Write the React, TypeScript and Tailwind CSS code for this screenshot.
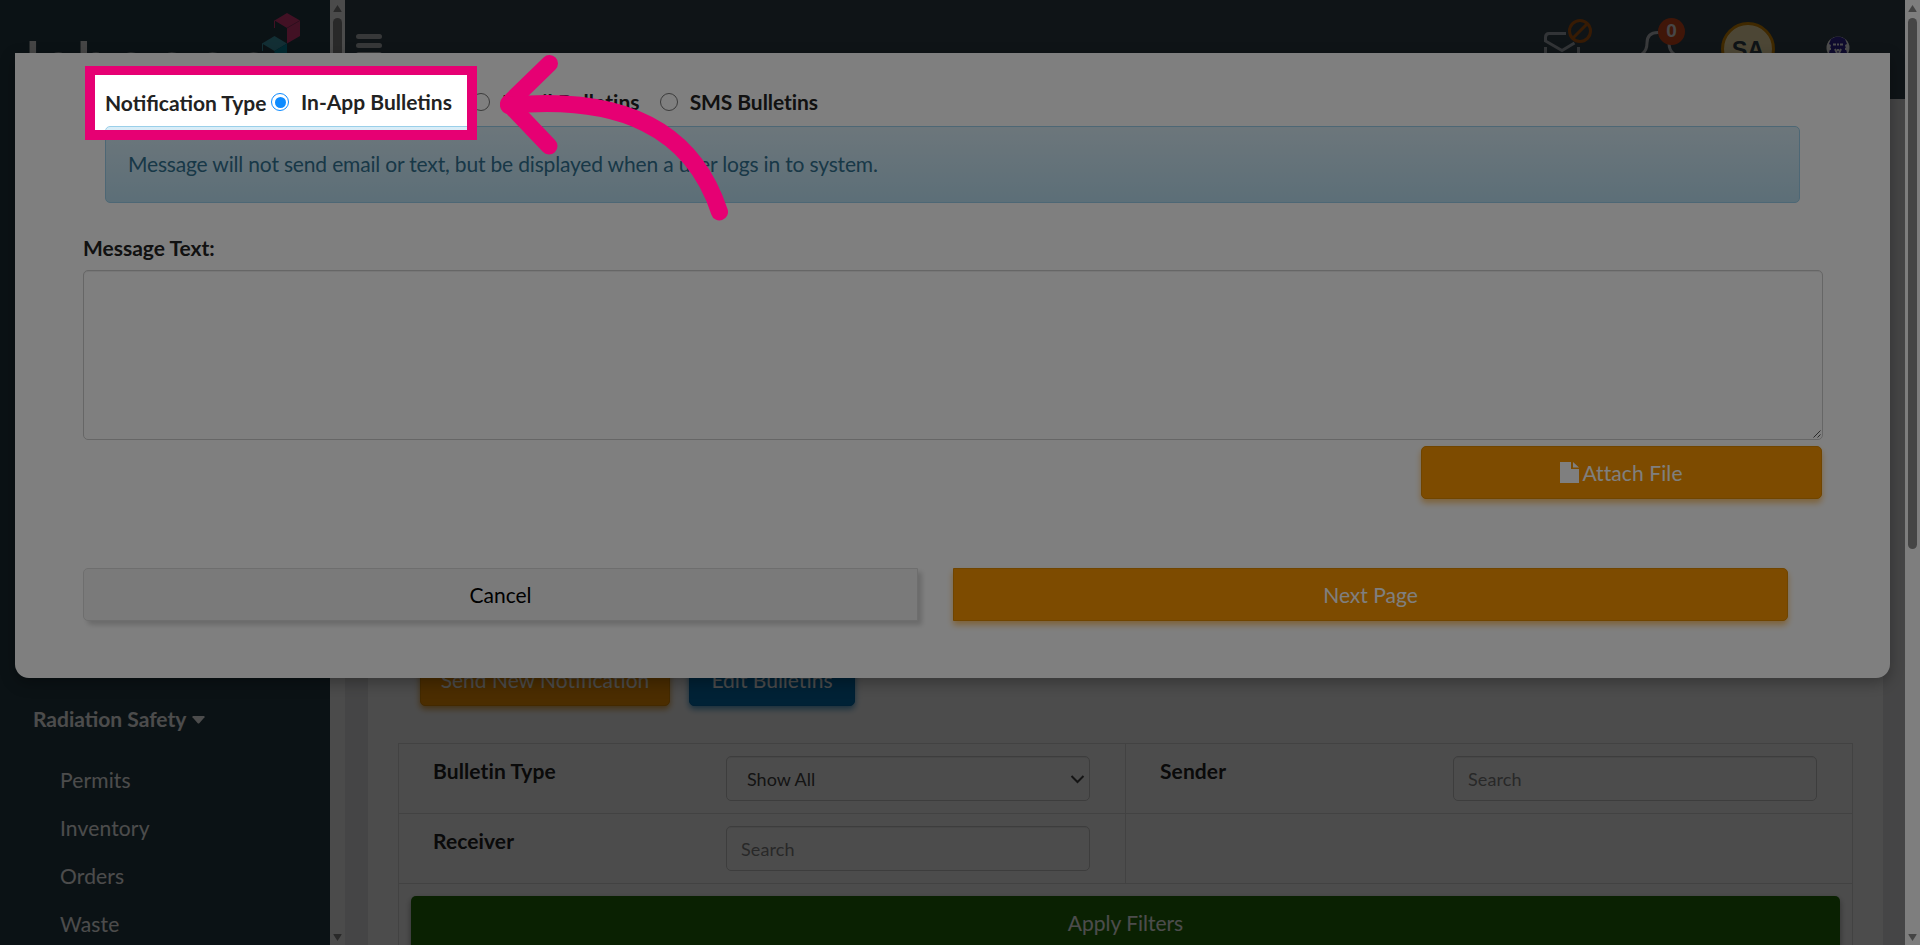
import type { ReactNode } from "react";

const navItems = ["Permits", "Inventory", "Orders", "Waste"];

function Scrollbar({ thumb, track }: { thumb: string; track: string }) {
  return (
    <div className={`flex h-full w-[15px] shrink-0 flex-col items-center justify-between ${track}`}>
      <div className="flex flex-col items-center">
        <svg className="mt-1 h-[9px] w-[9px]" viewBox="0 0 9 9" fill="#898989">
          <path d="M4.5 1 8.5 7.2V8H.5v-.8z" />
        </svg>
        <div className={`mt-[5px] w-[9px] rounded-full bg-[#8b8b8b] ${thumb}`} />
      </div>
      <svg className="mb-[3px] h-[9px] w-[9px]" viewBox="0 0 9 9" fill="#898989">
        <path d="M4.5 8 .5 1.8V1h8v.8z" />
      </svg>
    </div>
  );
}

function Sidebar() {
  return (
    <aside className="flex h-full w-[330px] shrink-0 flex-col overflow-hidden bg-[#253c46] text-white">
      <div className="flex h-[677px] shrink-0 items-start pt-[13px] pl-[25px]">
        <div className="mt-[14px] flex w-[236px] font-['Open_Sans'] text-[56px] leading-[68px] font-semibold text-[#e8e8e8]">
          <span className="tracking-[1.5px]">lab</span>
          <span className="pl-[1px] tracking-[13px]">cccc</span>
        </div>
        <svg className="h-[66px] w-[40px]" viewBox="0 0 40 66">
          <path d="M13.500 7.500 26 0l13 7.500L26 15z" fill="#dc3a7b" />
          <path d="M26 15 39 7.500V23L26 30.500z" fill="#dc3a7b" />
          <path d="M26 15 39 7.500" stroke="#8f2d5c" strokeWidth=".7" />
          <path d="M13.500 7.500V15" stroke="#dc3a7b" strokeWidth="1" />
          <path d="M1 30.500 13.500 23 26 30.500 13.500 38z" fill="#3f9db0" />
          <path d="M13.500 38 26 30.500V46l-12.500 7.500z" fill="#008ba3" />
          <path d="M1.500 30.500V38" stroke="#3f9db0" strokeWidth="1" />
        </svg>
      </div>
      <div className="flex items-center pt-[28px] pl-[33px] text-[21px] leading-[28px] font-bold">
        Radiation Safety
        <svg className="mt-[1px] ml-[6px] h-[8px] w-[13px]" viewBox="0 0 13 8" fill="#fff">
          <path d="M1 0h11q1 .4.500 1.300L7.300 7.200q-.8.700-1.600 0L.5 1.300Q0 .4 1 0z" />
        </svg>
      </div>
      <ul className="mt-[23px] pl-[60px] text-[21px] tracking-[0.15px]">
        {navItems.map((name) => (
          <li key={name} className="flex h-12 items-center">
            {name}
          </li>
        ))}
      </ul>
    </aside>
  );
}

function Header() {
  return (
    <header className="flex h-[99px] shrink-0 items-start justify-between bg-[#32434d] pr-[55px] pl-[10.500px]">
      <div className="mt-[34px] flex w-[26px] flex-col gap-[4px]">
        <span className="h-[5px] rounded-sm bg-[#b8bbbe]" />
        <span className="h-[5px] rounded-sm bg-[#b8bbbe]" />
        <span className="h-[5px] rounded-sm bg-[#b8bbbe]" />
      </div>
      <div className="flex items-start">
        <svg className="mt-[18px] h-[50px] w-[50px]" viewBox="0 0 50 50" fill="none">
          <g stroke="#a9b0b8" strokeWidth="3">
            <path d="M24 15.500H7q-3.500 0-3.500 4V23L20 32.500 32.500 25" />
            <path d="M3.500 29v14h33V29" />
          </g>
          <circle cx="38" cy="13" r="10.500" stroke="#b85a10" strokeWidth="3" />
          <path d="m30.500 20.500 15-15" stroke="#b85a10" strokeWidth="3" />
        </svg>
        <div className="relative mt-[30px] ml-[48px] h-[40px] w-[50px]">
          <svg className="h-[40px] w-[36px]" viewBox="0 0 36 40" fill="none" stroke="#c0c4c8" strokeWidth="3">
            <path d="M2 24q5-3.500 5-11Q7 2.500 18 2.500T29 13q0 7.500 5 11v5H2z" />
          </svg>
          <span className="absolute -top-[12px] left-[18px] flex h-[27px] w-[27px] items-center justify-center rounded-full bg-[#d84a1c] font-['Liberation_Sans'] text-[19px] font-bold text-[#eee]">
            0
          </span>
        </div>
        <div className="mt-[22px] ml-[31px] flex h-[54px] w-[54px] items-center justify-center rounded-full border-[3px] border-[#d68a00] bg-[#ffecb3] pt-[3px] font-['Liberation_Sans'] text-[23.500px] font-bold text-[#32434d]">
          SA
        </div>
        <svg className="mt-[36px] ml-[51px] h-[24px] w-[24px]" viewBox="0 0 24 24">
          <circle cx="12" cy="12" r="11.500" fill="#fff" />
          <path d="M5 3Q12-2 19 3l2 5-2 1 2 8-2 5q-7 4-14 0l-2-5 2-8-2-1z" fill="#32259a" />
          <path d="M7 8.500h3M11 8.500h2M14 8.500h3M9 13l2 4M15 13l-2 4M12 13v2M3 13h2M19 13h2" stroke="#fff" strokeWidth="2" />
        </svg>
      </div>
    </header>
  );
}

const field =
  "h-[45px] w-[364px] rounded-[5px] border border-[#ccc] text-[18px] shadow-[inset_0_1px_1px_rgba(0,0,0,.075)] flex items-center pt-[1px]";

function FilterCell({ label, children }: { label?: string; children?: ReactNode }) {
  return (
    <div className="flex h-[70px] border-b border-l border-[#ddd] pt-3 pl-[34px]">
      {label && (
        <div className="w-[293px] text-[21px] leading-[30px] font-bold tracking-[0.1px] text-[#222]">{label}</div>
      )}
      {children}
    </div>
  );
}

function PageBody() {
  return (
    <div className="h-full flex-1 bg-[#e8e8ea] pr-[22px] pl-[23px]">
      <div className="h-full bg-white px-[30px]">
        <div className="flex gap-[19px] pt-[554px] pl-[22px]">
          <button className="h-[53px] w-[250px] shrink-0 rounded-[5px] border border-[#e08a00] bg-[#fa9600] text-[21px] text-white shadow-[0_3px_6px_rgba(220,140,20,.8)]">
            Send New Notification
          </button>
          <button className="h-[53px] w-[166px] shrink-0 rounded-[5px] border border-[#006bad] bg-[#0072b5] text-[21px] text-white shadow-[0_3px_6px_rgba(0,114,181,.7)]">
            Edit Bulletins
          </button>
        </div>
        <div className="mt-[37px] border-t border-r border-[#ddd]">
          <div className="grid grid-cols-2">
            <FilterCell label="Bulletin Type">
              <div className={`${field} justify-between pr-[4px] pl-[20px] text-[#444]`}>
                Show All
                <svg className="h-[15px] w-[15px]" viewBox="0 0 15 15" fill="none" stroke="#444" strokeWidth="2">
                  <path d="m1.500 4 6 6 6-6" />
                </svg>
              </div>
            </FilterCell>
            <FilterCell label="Sender">
              <div className={`${field} pl-[14px] tracking-[0.1px] text-[#888]`}>Search</div>
            </FilterCell>
            <FilterCell label="Receiver">
              <div className={`${field} pl-[14px] tracking-[0.1px] text-[#888]`}>Search</div>
            </FilterCell>
            <FilterCell />
          </div>
          <div className="h-[200px] border-l border-[#ddd] px-3 pt-3">
            <button className="block h-[54px] w-full rounded-[5px] bg-[#237109] text-[21px] text-white shadow-[0_3px_6px_rgba(0,0,0,.4)]">
              Apply Filters
            </button>
          </div>
        </div>
      </div>
    </div>
  );
}

function Radio({ label, checked, className = "" }: { label: string; checked?: boolean; className?: string }) {
  return (
    <label className={`flex items-center font-bold ${className}`}>
      <span
        className={`flex h-[18px] w-[18px] items-center justify-center rounded-full ${
          checked ? "border-[1.5px] border-[#0d8bff]" : "border-[1.5px] border-[#767676]"
        }`}
      >
        {checked && <span className="h-[11px] w-[11px] rounded-full bg-[#0d8bff]" />}
      </span>
      <span className="ml-[12px]">{label}</span>
    </label>
  );
}

function NotificationModal() {
  return (
    <div className="absolute top-[53px] left-[15px] h-[625px] w-[1875px] rounded-b-[14px] bg-white px-[68px] text-[21px] text-[#222] shadow-[0_5px_15px_rgba(0,0,0,.3)]">
      <div className="flex h-[73px] items-start pt-[34px] pl-[22px] leading-[30px]">
        <span className="w-[166px] pt-[1px] font-bold whitespace-nowrap">Notification Type</span>
        <Radio label="In-App Bulletins" checked />
        <Radio label="Email Bulletins" className="ml-[20px] tracking-[0.05px]" />
        <Radio label="SMS Bulletins" className="ml-[20px] tracking-[-0.08px]" />
      </div>
      <div className="mr-[22px] ml-[22px] flex h-[77px] items-center rounded-[5px] border border-[#9acfea] bg-linear-to-b from-[#d9edf7] to-[#b9def0] pb-[2px] pl-[22px] tracking-[-0.17px] text-[#31708f]">
        Message will not send email or text, but be displayed when a user logs in to system.
      </div>
      <div className="mt-[30px] h-[37px] leading-[30px] font-bold">Message Text:</div>
      <div className="flex h-[170px] w-[1740px] items-end justify-end rounded-[5px] border border-[#ccc] p-[1px] shadow-[inset_0_1px_1px_rgba(0,0,0,.075)]">
        <svg className="h-[8px] w-[8px]" viewBox="0 0 8 8" stroke="#555" strokeWidth="1">
          <path d="M.5 7.500l7-7M4.500 7.500l3-3" />
        </svg>
      </div>
      <div className="flex justify-end pt-[6px]">
        <button className="flex h-[53px] w-[401px] items-center justify-center rounded-[5px] border border-[#e08a00] bg-[#fa9600] tracking-[0.1px] text-white shadow-[0_4px_6px_rgba(250,150,0,.55)]">
          <svg className="mr-[3px] h-[21px] w-[19px]" viewBox="0 0 19 21" fill="#fff">
            <path d="M0 0h11v7h8v14H0zM13 0l6 5.500h-6z" />
          </svg>
          Attach File
        </button>
      </div>
      <div className="flex gap-[35px] pt-[69px]">
        <button className="h-[53px] w-[835px] rounded-l-[5px] border border-[#ddd] bg-[#f5f5f5] text-black shadow-[4px_4px_5px_rgba(0,0,0,.17)]">
          Cancel
        </button>
        <button className="h-[53px] w-[835px] rounded-r-[5px] border border-[#e08a00] bg-[#fa9600] text-white shadow-[0_4px_6px_rgba(250,150,0,.55)]">
          Next Page
        </button>
      </div>
    </div>
  );
}

// Dims everything except the highlighted option and points at it
function Spotlight() {
  return (
    <>
      <div className="absolute top-[75px] left-[95px] h-[55px] w-[372px] shadow-[0_0_0_2000px_rgba(0,0,0,.5)]" />
      <div className="absolute top-[66px] left-[85px] h-[74px] w-[392px] border-[10px] border-t-[9px] border-[#e60073]" />
      <svg
        className="absolute top-[50px] left-[490px] h-[180px] w-[250px]"
        viewBox="490 50 250 180"
        fill="none"
        stroke="#e60073"
        strokeWidth="17"
        strokeLinecap="round"
        strokeLinejoin="round"
      >
        <path d="M549.500 63.500 508.500 103.500 549 146" />
        <path d="M508.500 105.500C620 95 692 128 719.500 212" />
      </svg>
    </>
  );
}

export default function App() {
  return (
    <div className="relative h-[945px] w-[1920px] overflow-hidden bg-white font-[Lato,sans-serif]">
      <div className="flex h-full">
        <div className="relative flex h-full w-[1905px]">
          <Sidebar />
          <Scrollbar track="bg-[#fcfcfc]" thumb="h-[500px]" />
          <div className="flex h-full flex-1 flex-col overflow-hidden">
            <Header />
            <PageBody />
          </div>
          <div className="absolute inset-0 bg-black/40" />
        </div>
        <Scrollbar track="bg-[#fcfcfc]" thumb="h-[531px]" />
      </div>
      <NotificationModal />
      <Spotlight />
    </div>
  );
}
